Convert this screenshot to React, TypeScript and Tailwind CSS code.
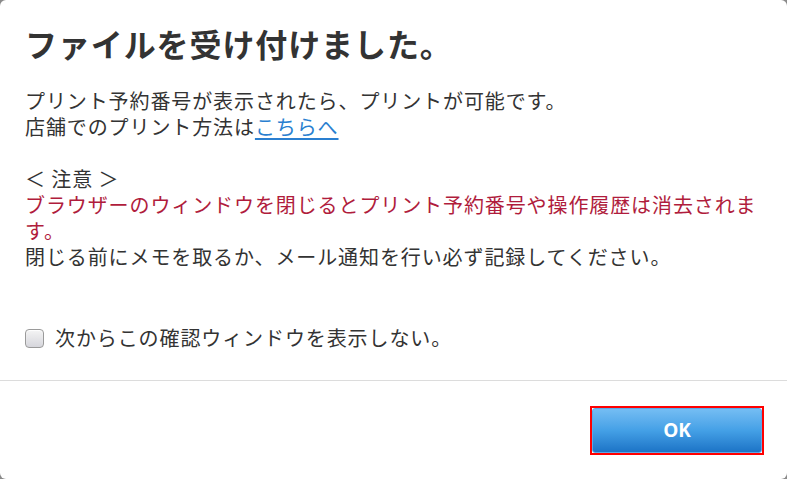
import React from "react";

export default function App() {
  return (
    <div className="w-[787px] h-[479px] bg-[#8a8a8a] overflow-hidden">
      <div
        className="w-[787px] h-[479px] bg-white rounded-[6px] flex flex-col text-[#333333]"
        style={{ fontFamily: '"Noto Sans CJK JP", "Noto Sans", sans-serif' }}
      >
        <div className="px-[25px] pt-[25px] h-[380px]">
          <h1 className="text-[32px] leading-[36px] font-bold tracking-[0.9px] text-[#333333]">
            ファイルを受け付けました。
          </h1>
          <div className="mt-[27px] text-[20px] leading-[26px] tracking-[0.9px]">
            <p>プリント予約番号が表示されたら、プリントが可能です。</p>
            <p>
              店舗でのプリント方法は
              <a className="text-[#2a7fd0] underline underline-offset-[3px]" href="#">
                こちらへ
              </a>
            </p>
            <p className="h-[26px]"></p>
            <p>＜ 注意 ＞</p>
            <p className="text-[#b01c3c]">
              ブラウザーのウィンドウを閉じるとプリント予約番号や操作履歴は消去されます。
            </p>
            <p>閉じる前にメモを取るか、メール通知を行い必ず記録してください。</p>
          </div>
          <label className="mt-[55px] flex items-center gap-[11px] text-[20px] leading-[26px] tracking-[0.9px]">
            <span className="w-[19px] h-[19px] rounded-[4px] border border-[#9a9a9a] bg-gradient-to-b from-[#f4f4f4] to-[#d6d6dc] shadow-[inset_0_1px_1px_rgba(255,255,255,0.9)]"></span>
            <span>次からこの確認ウィンドウを表示しない。</span>
          </label>
        </div>
        <div className="h-px bg-[#dcdcdc]"></div>
        <div className="flex justify-end pt-[25px] pr-[23px]">
          <div className="w-[174px] h-[49px] border-2 border-[#ff0000]">
            <button className="w-full h-full rounded-[3px] border border-[#5aa8e8] bg-gradient-to-b from-[#74bdf3] via-[#44a0e6] to-[#1c74c6] text-white text-[19px] font-bold flex items-center justify-center"
              style={{ fontFamily: '"Open Sans", "Noto Sans", sans-serif' }}
            >
              OK
            </button>
          </div>
        </div>
      </div>
    </div>
  );
}
